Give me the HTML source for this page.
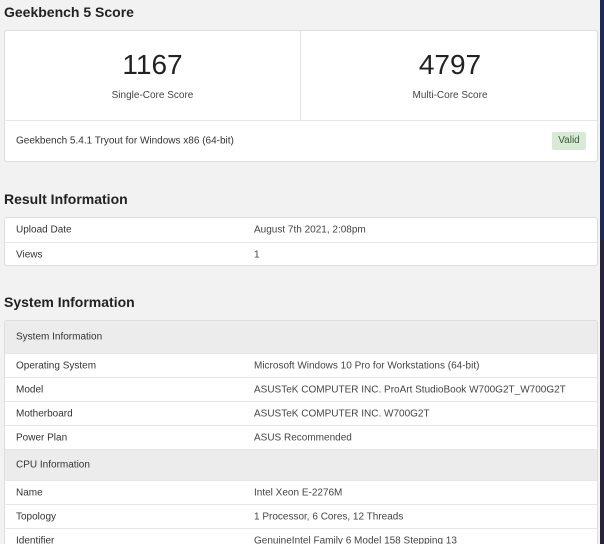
<!DOCTYPE html>
<html><head><style>
*{margin:0;padding:0;box-sizing:border-box}
html,body{width:604px;height:544px;overflow:hidden}
body{background:#f2f2f2;font-family:"Liberation Sans",Arial,sans-serif;color:#333;position:relative}
.a{position:absolute}
h2{position:absolute;left:4px;font-size:14px;font-weight:bold;color:#222}
.card{position:absolute;left:4px;width:594px;background:#fff;border:1px solid #ddd;border-radius:3px;overflow:hidden}
.row{position:absolute;left:0;right:0;border-top:1px solid #e6e6e6;font-size:10px;color:#333}
.row span{position:absolute;top:50%;transform:translateY(-50%)}
.k{left:11px}.v{left:249px;color:#444}
.hd{background:#ececec}
</style></head><body>
<div class="a" style="left:600px;top:0;width:4px;height:240px;background:#1a2a5a"></div>
<div class="a" style="left:600px;top:240px;width:4px;height:304px;background:#2a2040"></div>
<h2 style="top:4px">Geekbench 5 Score</h2>
<div class="card" style="top:30px;height:132px">
<div class="a" style="left:295px;top:0;width:1px;height:89px;background:#e3e3e3"></div>
<div class="a" style="left:0;width:295px;top:18px;text-align:center;font-size:28px;color:#222">1167</div>
<div class="a" style="left:0;width:295px;top:59px;text-align:center;font-size:10px;color:#444">Single-Core Score</div>
<div class="a" style="left:296px;width:298px;top:18px;text-align:center;font-size:28px;color:#222">4797</div>
<div class="a" style="left:296px;width:298px;top:59px;text-align:center;font-size:10px;color:#444">Multi-Core Score</div>
<div class="row" style="top:89px;bottom:0"><span class="k">Geekbench 5.4.1 Tryout for Windows x86 (64-bit)</span>
<span style="left:547px;width:34px;height:18px;line-height:18px;text-align:center;background:#d6ead5;color:#3a5a3a;border-radius:2px">Valid</span></div>
</div>
<h2 style="top:191px">Result Information</h2>
<div class="card" style="top:217px;height:49px">
<div class="row" style="top:0;height:24px;border-top:0"><span class="k">Upload Date</span><span class="v">August 7th 2021, 2:08pm</span></div>
<div class="row" style="top:24px;height:24px"><span class="k">Views</span><span class="v">1</span></div>
</div>
<h2 style="top:294px">System Information</h2>
<div class="card" style="top:320px;height:240px">
<div class="row hd" style="top:0;height:32px;border-top:0"><span class="k">System Information</span></div>
<div class="row" style="top:32px;height:24px"><span class="k">Operating System</span><span class="v">Microsoft Windows 10 Pro for Workstations (64-bit)</span></div>
<div class="row" style="top:56px;height:24px"><span class="k">Model</span><span class="v">ASUSTeK COMPUTER INC. ProArt StudioBook W700G2T_W700G2T</span></div>
<div class="row" style="top:80px;height:24px"><span class="k">Motherboard</span><span class="v">ASUSTeK COMPUTER INC. W700G2T</span></div>
<div class="row" style="top:104px;height:24px"><span class="k">Power Plan</span><span class="v">ASUS Recommended</span></div>
<div class="row hd" style="top:128px;height:31px"><span class="k">CPU Information</span></div>
<div class="row" style="top:159px;height:24px"><span class="k">Name</span><span class="v">Intel Xeon E-2276M</span></div>
<div class="row" style="top:183px;height:24px"><span class="k">Topology</span><span class="v">1 Processor, 6 Cores, 12 Threads</span></div>
<div class="row" style="top:207px;height:24px"><span class="k">Identifier</span><span class="v">GenuineIntel Family 6 Model 158 Stepping 13</span></div>
</div>
</body></html>
